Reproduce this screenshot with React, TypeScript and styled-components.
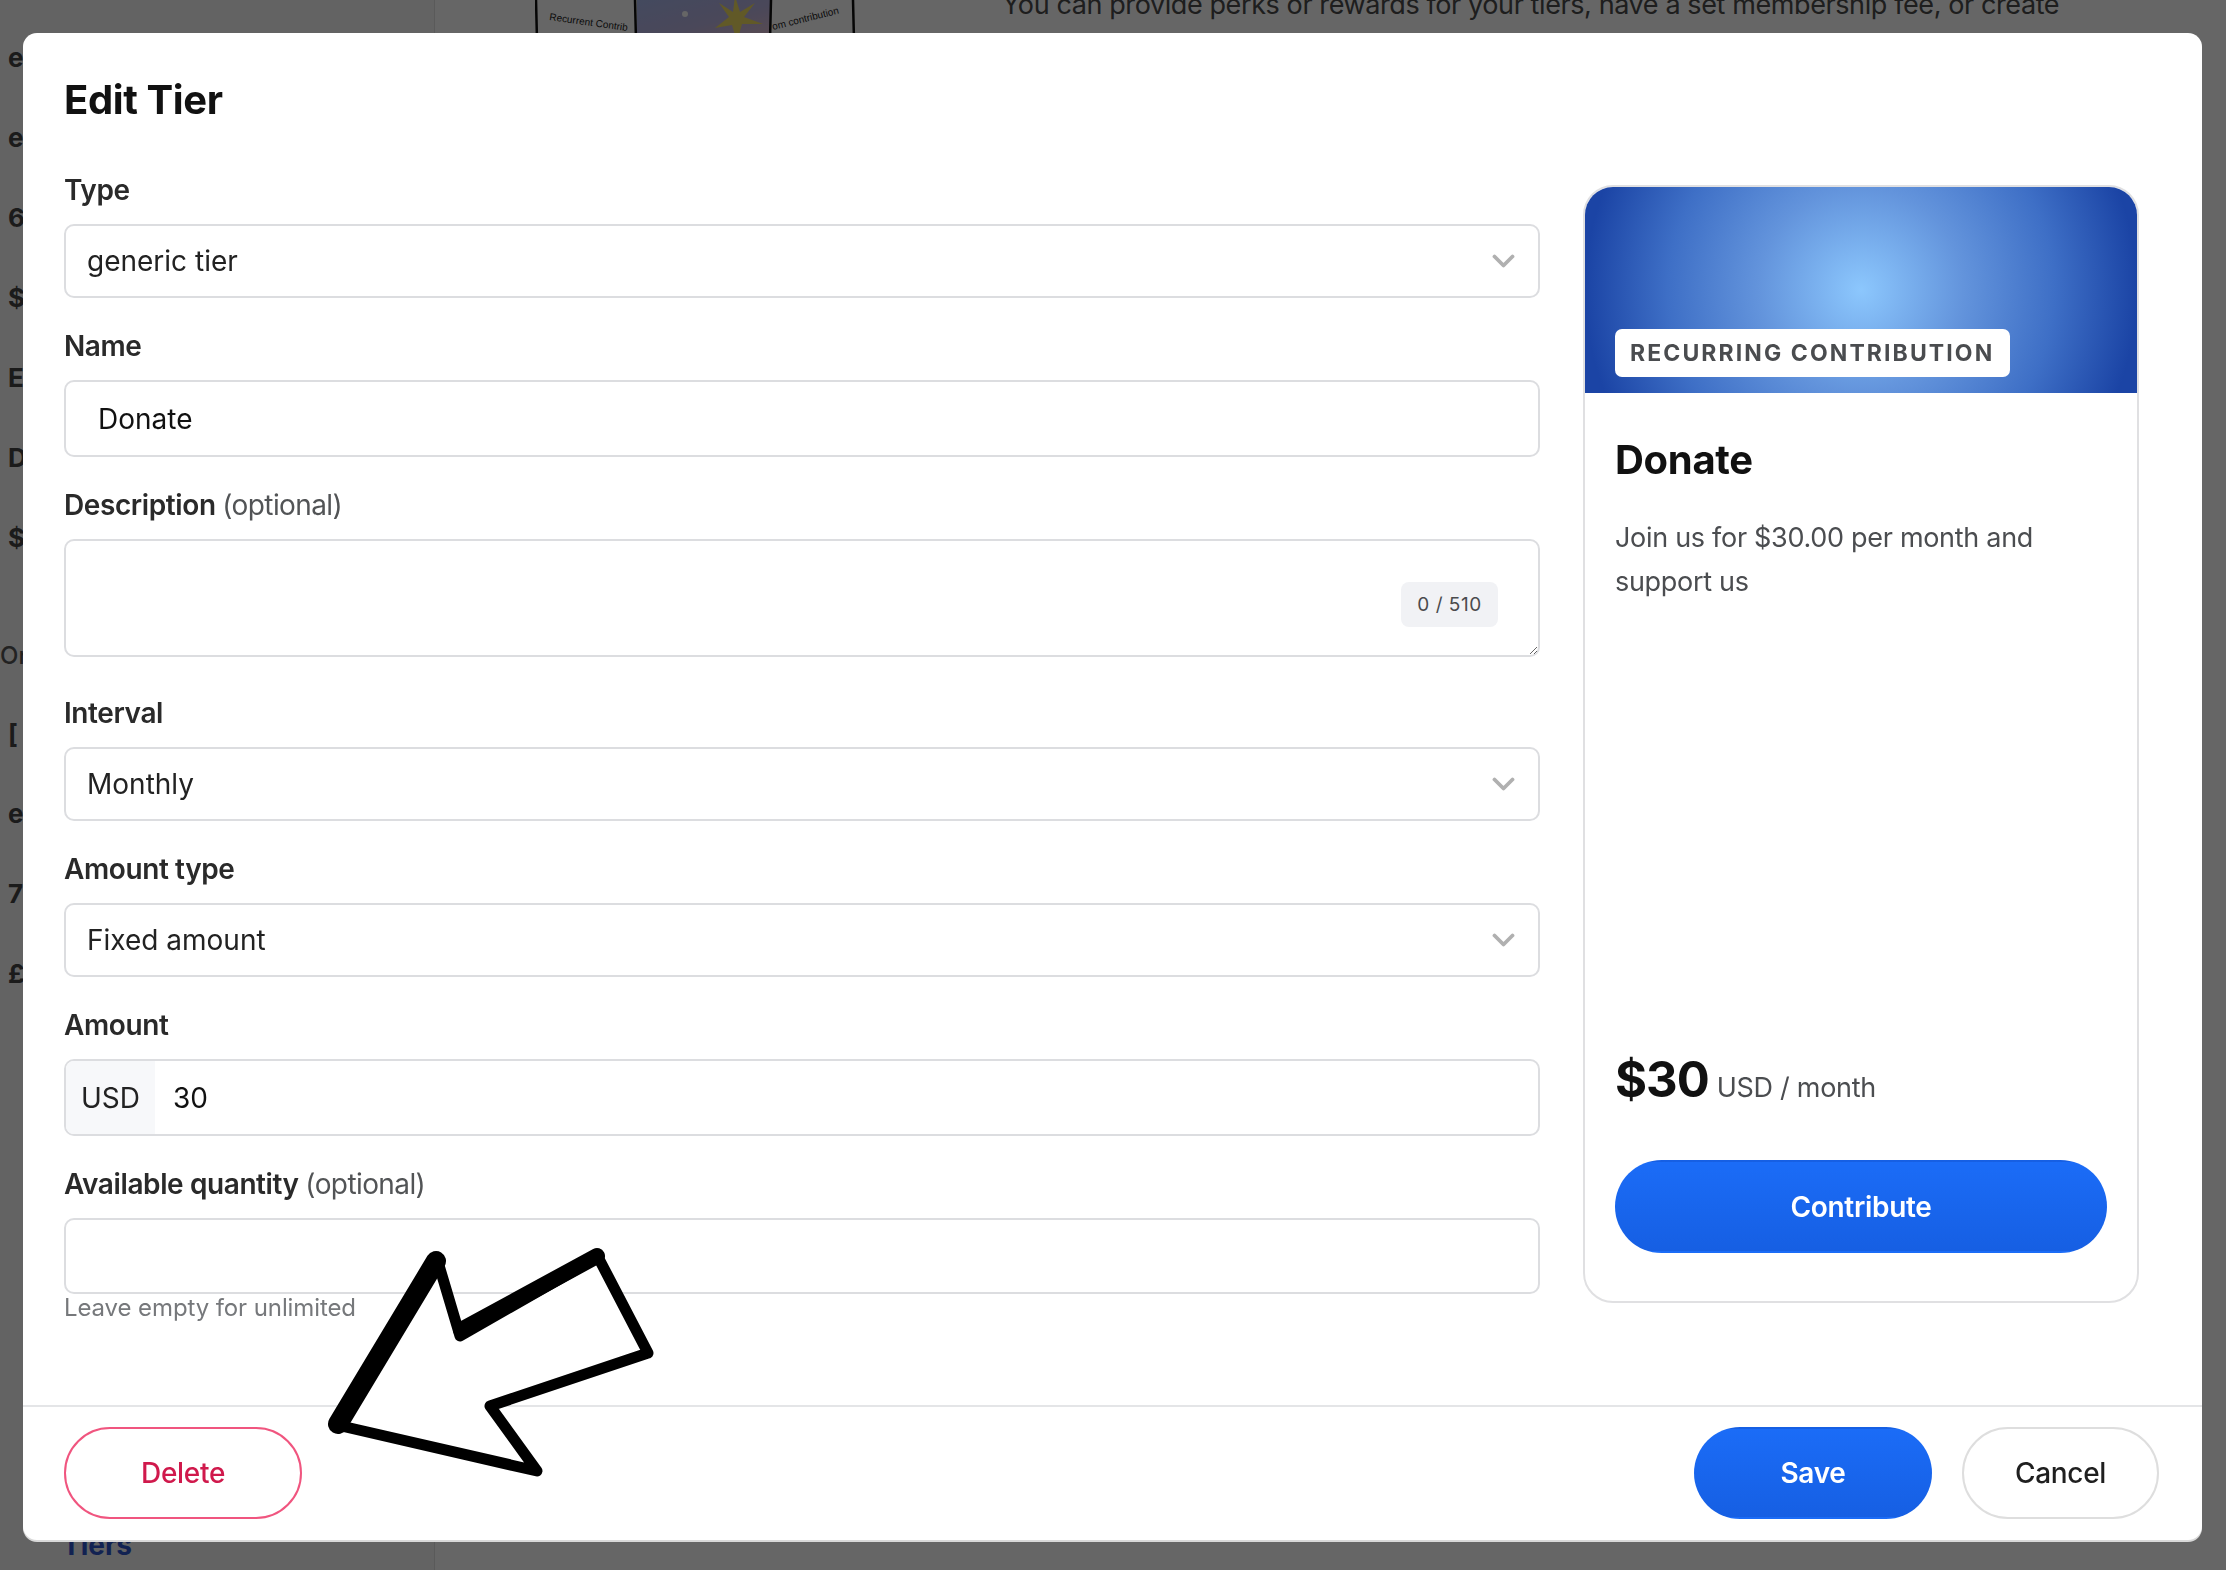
import React from "react";
import styled, { createGlobalStyle } from "styled-components";

const Global = createGlobalStyle`
  html, body { margin: 0; padding: 0; }
  body {
    width: 2226px;
    height: 1570px;
    overflow: hidden;
    background: #ffffff;
    font-family: Inter, "Noto Sans", "Liberation Sans", sans-serif;
  }
  * { box-sizing: border-box; }
`;

/* ---------- background page ---------- */
const Page = styled.div`
  width: 2226px;
  height: 1570px;
  display: flex;
`;

const Sidebar = styled.nav`
  width: 435px;
  flex-shrink: 0;
  background: #f7f7f7;
  border-right: 1px solid #e0e0e0;
  padding: 17px 0 8px;
  display: flex;
  flex-direction: column;
`;

const NavItem = styled.div`
  height: 80px;
  display: flex;
  align-items: center;
  padding-left: 8px;
  font-size: 26px;
  font-weight: 700;
  color: #444;
  white-space: nowrap;
`;

const NavSection = styled.div`
  height: 116px;
  display: flex;
  align-items: flex-end;
  padding: 0 0 22px 0;
  font-size: 24px;
  line-height: 30px;
  font-weight: 500;
  color: #555;
`;

const NavLink = styled.div`
  margin-top: auto;
  padding-left: 62px;
  font-size: 28px;
  line-height: 34px;
  font-weight: 700;
  color: #2f55cc;
`;

const Main = styled.main`
  flex: 1;
  display: flex;
  align-items: flex-start;
  padding-left: 100px;
`;

const Intro = styled.p`
  margin: -15px 0 0 137px;
  width: 1100px;
  font-size: 27px;
  line-height: 40px;
  letter-spacing: -0.4px;
  color: #4b4b4b;
`;

const Backdrop = styled.div`
  position: fixed;
  inset: 0;
  background: rgba(0, 0, 0, 0.6);
`;

/* ---------- modal ---------- */
const Modal = styled.div`
  position: fixed;
  left: 23px;
  top: 33px;
  width: 2179px;
  height: 1507px;
  background: #ffffff;
  border-radius: 14px;
  box-shadow: 0 2px 0 #d9d9d9;
  display: flex;
  flex-direction: column;
`;

const Body = styled.div`
  flex: 1;
  padding: 43px 63px 0 41px;
  display: flex;
  flex-direction: column;
`;

const Title = styled.h2`
  margin: 0;
  font-size: 40px;
  line-height: 48px;
  font-weight: 700;
  color: #111;
  letter-spacing: -0.4px;
`;

const Columns = styled.div`
  margin-top: 48px;
  display: grid;
  grid-template-columns: 1fr 556px;
  column-gap: 43px;
  align-items: start;
`;

const Form = styled.div`
  display: flex;
  flex-direction: column;
`;

const Field = styled.div<{ $after?: number }>`
  margin-bottom: ${(p) => p.$after ?? 30}px;
`;

const Label = styled.div`
  font-size: 28px;
  line-height: 36px;
  font-weight: 600;
  color: #2a2a2a;
  letter-spacing: -0.4px;
  margin-bottom: 16px;
`;

const Optional = styled.span`
  font-weight: 400;
  color: #525456;
  letter-spacing: -0.6px;
`;

const SelectBox = styled.div`
  height: 74px;
  border: 2px solid #dcdde0;
  border-radius: 10px;
  display: flex;
  align-items: center;
  justify-content: space-between;
  padding: 0 23px 0 21px;
  font-size: 28px;
  color: #222;
`;

const TextInput = styled.input<{ $h?: number }>`
  display: block;
  width: 100%;
  height: ${(p) => p.$h ?? 77}px;
  border: 2px solid #dcdde0;
  border-radius: 10px;
  padding: 0 0 0 32px;
  font-family: inherit;
  font-size: 28px;
  color: #111;
  background: #fff;
  outline: none;
`;

const AreaWrap = styled.div`
  position: relative;
`;

const TextArea = styled.textarea`
  display: block;
  width: 100%;
  height: 118px;
  border: 2px solid #dcdde0;
  border-radius: 10px;
  font-family: inherit;
  font-size: 28px;
  padding: 16px 32px;
  outline: none;
  resize: both;
`;

const Counter = styled.span`
  position: absolute;
  right: 42px;
  top: 43px;
  width: 97px;
  height: 45px;
  border-radius: 8px;
  background: #f1f2f5;
  display: flex;
  align-items: center;
  justify-content: center;
  font-size: 19px;
  color: #4a4b4d;
  letter-spacing: 0.5px;
`;

const InputGroup = styled.div`
  height: 77px;
  border: 2px solid #dcdde0;
  border-radius: 10px;
  overflow: hidden;
  display: flex;
  align-items: stretch;
  font-size: 28px;
  color: #111;
`;

const Prefix = styled.div`
  width: 89px;
  background: #f7f8fa;
  display: flex;
  align-items: center;
  padding-left: 15px;
  color: #222;
`;

const GroupValue = styled.div`
  flex: 1;
  display: flex;
  align-items: center;
  padding-left: 18px;
`;

const Help = styled.div`
  font-size: 24px;
  line-height: 28px;
  color: #76787b;
  letter-spacing: -0.1px;
`;

/* ---------- preview card ---------- */
const Card = styled.div`
  margin-top: 13px;
  height: 1118px;
  border: 2px solid #e0e0e2;
  border-radius: 30px;
  overflow: hidden;
  display: flex;
  flex-direction: column;
`;

const CardHeader = styled.div`
  height: 206px;
  flex-shrink: 0;
  background: radial-gradient(
    circle farthest-side at 50% 50%,
    #8cc7fd 0%,
    #6394dc 37%,
    #3e6fc6 70%,
    #1b44a5 100%
  );
  display: flex;
  align-items: flex-end;
  padding: 0 30px 16px;
`;

const Badge = styled.span`
  height: 48px;
  padding: 0 16px 0 15px;
  background: #ffffff;
  border-radius: 7px;
  display: flex;
  align-items: center;
  font-size: 23px;
  font-weight: 700;
  letter-spacing: 2.1px;
  color: #4a4c4f;
`;

const CardBody = styled.div`
  flex: 1;
  padding: 43px 30px 48px;
  display: flex;
  flex-direction: column;
`;

const CardTitle = styled.h3`
  margin: 0;
  font-size: 40px;
  line-height: 48px;
  font-weight: 700;
  color: #111;
  letter-spacing: -0.3px;
`;

const CardText = styled.p`
  margin: 32px 0 0;
  font-size: 27px;
  line-height: 44px;
  color: #4b4d50;
  letter-spacing: -0.3px;
`;

const PriceRow = styled.div`
  margin-top: auto;
  display: flex;
  align-items: baseline;
  line-height: 60px;
`;

const Price = styled.span`
  font-size: 49px;
  font-weight: 700;
  color: #111;
  letter-spacing: -1px;
`;

const Unit = styled.span`
  margin-left: 8px;
  font-size: 27px;
  color: #4b4d50;
  letter-spacing: -0.3px;
`;

const PillButton = styled.button<{ $variant: "primary" | "danger" | "plain"; $w?: number; $h?: number }>`
  width: ${(p) => (p.$w ? `${p.$w}px` : "100%")};
  height: ${(p) => p.$h ?? 92}px;
  border-radius: 47px;
  font-family: inherit;
  font-size: 28px;
  font-weight: ${(p) => (p.$variant === "primary" ? 600 : 500)};
  letter-spacing: -0.3px;
  cursor: pointer;
  border: 2px solid
    ${(p) => (p.$variant === "danger" ? "#f0557f" : p.$variant === "plain" ? "#dedede" : "transparent")};
  color: ${(p) => (p.$variant === "danger" ? "#d0194c" : p.$variant === "plain" ? "#1f1f1f" : "#ffffff")};
  background: ${(p) =>
    p.$variant === "primary" ? "linear-gradient(180deg, #1b6cf7 0%, #165fe3 100%)" : "#ffffff"};
`;

const ContributeWrap = styled.div`
  margin-top: 42px;
`;

const Footer = styled.div`
  border-top: 2px solid #e4e5e7;
  padding: 20px 43px 21px 41px;
  display: flex;
  align-items: center;
  gap: 30px;
`;

const Spacer = styled.div`
  flex: 1;
`;

const Annotation = styled.svg`
  position: fixed;
  left: 0;
  top: 0;
  width: 2226px;
  height: 1570px;
  pointer-events: none;
`;

const Sketch = styled.svg`
  flex-shrink: 0;
  display: block;
`;

const Chevron = () => (
  <svg width="23" height="14" viewBox="0 0 23 14">
    <path
      d="M2.5 2.5l9 9 9-9"
      stroke="#b0b0b0"
      strokeWidth="3.8"
      fill="none"
      strokeLinecap="round"
      strokeLinejoin="round"
    />
  </svg>
);

const navTop = ["edit", "expenses", "6 tiers", "$ balance", "Events", "Details", "$ payouts"];
const navBottom = ["[ info", "emails", "7 settings", "£ fees"];

export default function App() {
  return (
    <>
      <Global />
      <Page>
        <Sidebar>
          {navTop.map((t) => (
            <NavItem key={t}>{t}</NavItem>
          ))}
          <NavSection>Organization</NavSection>
          {navBottom.map((t) => (
            <NavItem key={t}>{t}</NavItem>
          ))}
          <NavLink>Tiers</NavLink>
        </Sidebar>
        <Main>
          <Sketch width="330" height="40" viewBox="0 0 330 40">
            <defs>
              <linearGradient id="art" x1="0" y1="0" x2="1" y2="1">
                <stop offset="0" stopColor="#a9b8ec" />
                <stop offset="0.55" stopColor="#b9b3e0" />
                <stop offset="1" stopColor="#e0bccb" />
              </linearGradient>
            </defs>
            <rect x="102" y="0" width="134" height="40" fill="url(#art)" />
            <polygon
              points="200,-4 205,12 220,3 209,17 228,24 207,24 202,42 197,25 180,28 194,17 184,3 198,12"
              fill="#f2de63"
            />
            <circle cx="150" cy="14" r="3" fill="#fff" />
            <path d="M1 0 L2 40 M100 0 L101 40 M236 0 L235 40 M318 0 L319 40" stroke="#111" strokeWidth="2.5" fill="none" />
            <text x="14" y="20" fontSize="10" fill="#222" transform="rotate(8 14 20)" fontFamily="Liberation Sans, sans-serif">
              Recurrent Contrib
            </text>
            <text x="238" y="30" fontSize="10" fill="#222" transform="rotate(-14 238 30)" fontFamily="Liberation Sans, sans-serif">
              om contribution
            </text>
          </Sketch>
          <Intro>
            You can provide perks or rewards for your tiers, have a set membership fee, or create
            categories for your contributors. Tiers can be limited to an amount or frequency (one time,
            monthly, yearly), or allow contributors to choose.
          </Intro>
        </Main>
      </Page>

      <Backdrop />

      <Modal>
        <Body>
          <Title>Edit Tier</Title>
          <Columns>
            <Form>
              <Field>
                <Label>Type</Label>
                <SelectBox>
                  <span>generic tier</span>
                  <Chevron />
                </SelectBox>
              </Field>
              <Field>
                <Label>Name</Label>
                <TextInput readOnly value="Donate" />
              </Field>
              <Field $after={38}>
                <Label>
                  Description <Optional>(optional)</Optional>
                </Label>
                <AreaWrap>
                  <TextArea readOnly value="" />
                  <Counter>0 / 510</Counter>
                </AreaWrap>
              </Field>
              <Field>
                <Label>Interval</Label>
                <SelectBox>
                  <span>Monthly</span>
                  <Chevron />
                </SelectBox>
              </Field>
              <Field>
                <Label>Amount type</Label>
                <SelectBox>
                  <span>Fixed amount</span>
                  <Chevron />
                </SelectBox>
              </Field>
              <Field>
                <Label>Amount</Label>
                <InputGroup>
                  <Prefix>USD</Prefix>
                  <GroupValue>30</GroupValue>
                </InputGroup>
              </Field>
              <Field $after={0}>
                <Label>
                  Available quantity <Optional>(optional)</Optional>
                </Label>
                <TextInput readOnly value="" $h={76} />
                <Help>Leave empty for unlimited</Help>
              </Field>
            </Form>

            <Card>
              <CardHeader>
                <Badge>RECURRING CONTRIBUTION</Badge>
              </CardHeader>
              <CardBody>
                <CardTitle>Donate</CardTitle>
                <CardText>Join us for $30.00 per month and support us</CardText>
                <PriceRow>
                  <Price>$30</Price>
                  <Unit>USD / month</Unit>
                </PriceRow>
                <ContributeWrap>
                  <PillButton $variant="primary" $h={93}>
                    Contribute
                  </PillButton>
                </ContributeWrap>
              </CardBody>
            </Card>
          </Columns>
        </Body>
        <Footer>
          <PillButton $variant="danger" $w={238}>
            Delete
          </PillButton>
          <Spacer />
          <PillButton $variant="primary" $w={238}>
            Save
          </PillButton>
          <PillButton $variant="plain" $w={197}>
            Cancel
          </PillButton>
        </Footer>
      </Modal>

      <Annotation viewBox="0 0 2226 1570">
        <polygon
          points="337,1425 438,1262 460,1336 598,1257 648,1353 490,1406 537,1471"
          fill="#ffffff"
          stroke="#000000"
          strokeWidth="11"
          strokeLinejoin="round"
        />
        <line x1="338" y1="1424" x2="436" y2="1261" stroke="#000" strokeWidth="20" strokeLinecap="round" />
        <line x1="461" y1="1330" x2="597" y2="1256" stroke="#000" strokeWidth="16" strokeLinecap="round" />
      </Annotation>
    </>
  );
}
